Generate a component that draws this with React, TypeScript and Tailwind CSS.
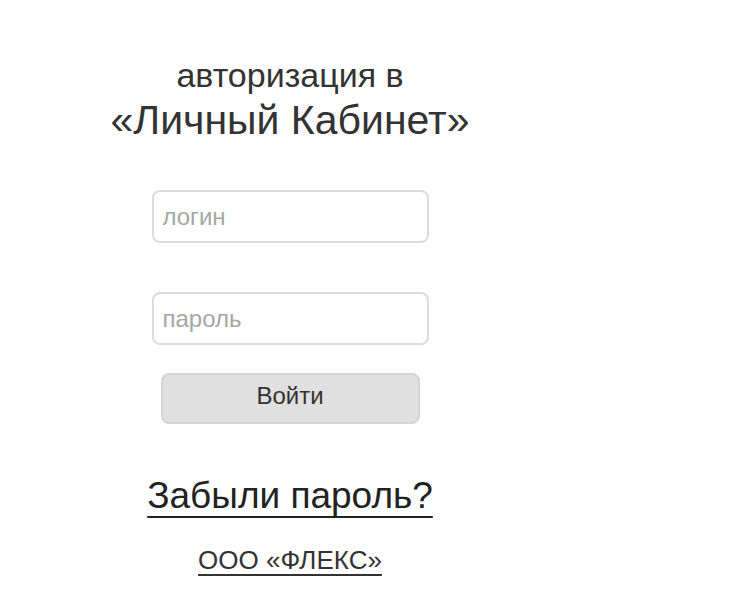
const App = () => {
  return (
    <div className="min-h-screen w-full bg-white font-['Liberation_Sans',Arial,sans-serif] text-[#333]">
      <div className="ml-[90px] w-[400px] flex flex-col items-center pt-[54px]">
        <h1 className="text-center font-normal">
          <span className="block text-[34px] leading-[43px]">авторизация в</span>
          <span className="block text-[41px] leading-[46px]">«Личный Кабинет»</span>
        </h1>

        <form className="flex flex-col items-center mt-[47px]" onSubmit={(e) => e.preventDefault()}>
          <input
            placeholder="логин"
            className="w-[277px] h-[53px] rounded-lg border-2 border-[#dcdcdc] bg-white pl-[9px] pr-2 text-[24px] text-[#333] placeholder:text-[#a6a6a6] outline-none"
          />
          <input
            type="password"
            placeholder="пароль"
            className="w-[277px] h-[53px] mt-[49px] rounded-lg border-2 border-[#dcdcdc] bg-white pl-[9px] pr-2 text-[24px] text-[#333] placeholder:text-[#a6a6a6] outline-none"
          />
          <button
            type="submit"
            className="w-[259px] h-[51px] mt-[28px] pb-[5px] rounded-lg border-2 border-[#d4d4d4] bg-[#e0e0e0] text-[24px] text-[#333]"
          >
            Войти
          </button>
        </form>

        <a href="#" className="mt-[50px] text-[37px] leading-[44px] text-[#222] underline decoration-2 underline-offset-[8px]">
          Забыли пароль?
        </a>
        <a href="#" className="mt-[27px] text-[26px] leading-[30px] text-[#333] underline decoration-2 underline-offset-[5px]">
          ООО «ФЛЕКС»
        </a>
      </div>
    </div>
  );
};

export default App;
